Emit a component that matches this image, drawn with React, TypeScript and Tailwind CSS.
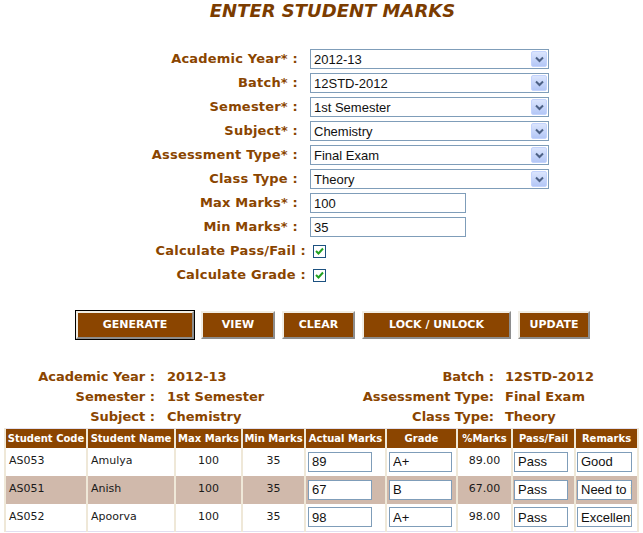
import React from 'react';

const brown = 'text-[#8a4500]';

function SelectBox({ value }: { value: string }) {
  return (
    <div className="flex h-[20px] w-[239px] items-center border border-[#7f9db9] bg-white">
      <span className="flex-1 pl-[3px] font-['Liberation_Sans',Arial,sans-serif] text-[13px] leading-none text-[#111]">
        {value}
      </span>
      <span className="mr-[1px] flex h-[16px] w-[16px] items-center justify-center rounded-[2px] border border-[#c3d3fd] bg-gradient-to-b from-[#dbe5fd] to-[#b4c7f6]">
        <svg width="9" height="7" viewBox="0 0 9 7">
          <path d="M1 1.5 L4.5 5 L8 1.5" fill="none" stroke="#4d6185" strokeWidth="2" />
        </svg>
      </span>
    </div>
  );
}

function TextBox({ value, w }: { value: string; w: string }) {
  return (
    <input
      readOnly
      value={value}
      className={`block h-[20px] border border-[#7f9db9] bg-white pl-[3px] font-['Liberation_Sans',Arial,sans-serif] text-[13px] leading-none text-[#111] outline-none ${w}`}
    />
  );
}

function Check() {
  return (
    <span className="flex h-[13px] w-[13px] items-center justify-center border border-[#1c5180] bg-white">
      <svg width="9" height="8" viewBox="0 0 9 8">
        <path d="M1 4 L3.5 6.5 L8 1.5" fill="none" stroke="#21a121" strokeWidth="2" />
      </svg>
    </span>
  );
}

const formRows: { label: string; kind: 'select' | 'text' | 'check'; value?: string }[] = [
  { label: 'Academic Year* :', kind: 'select', value: '2012-13' },
  { label: 'Batch* :', kind: 'select', value: '12STD-2012' },
  { label: 'Semester* :', kind: 'select', value: '1st Semester' },
  { label: 'Subject* :', kind: 'select', value: 'Chemistry' },
  { label: 'Assessment Type* :', kind: 'select', value: 'Final Exam' },
  { label: 'Class Type :', kind: 'select', value: 'Theory' },
  { label: 'Max Marks* :', kind: 'text', value: '100' },
  { label: 'Min Marks* :', kind: 'text', value: '35' },
  { label: 'Calculate Pass/Fail :', kind: 'check' },
  { label: 'Calculate Grade :', kind: 'check' },
];

const buttons = [
  { label: 'GENERATE', w: 'w-[118px]', focus: true },
  { label: 'VIEW', w: 'w-[74px]' },
  { label: 'CLEAR', w: 'w-[73px]' },
  { label: 'LOCK / UNLOCK', w: 'w-[149px]' },
  { label: 'UPDATE', w: 'w-[72px]' },
];

const students = [
  { code: 'AS053', name: 'Amulya', actual: '89', grade: 'A+', pct: '89.00', pf: 'Pass', remarks: 'Good' },
  { code: 'AS051', name: 'Anish', actual: '67', grade: 'B', pct: '67.00', pf: 'Pass', remarks: 'Need to improve' },
  { code: 'AS052', name: 'Apoorva', actual: '98', grade: 'A+', pct: '98.00', pf: 'Pass', remarks: 'Excellent' },
];

const headers = [
  'Student Code',
  'Student Name',
  'Max Marks',
  'Min Marks',
  'Actual Marks',
  'Grade',
  '%Marks',
  'Pass/Fail',
  'Remarks',
];
const colW = [82, 88, 67, 63, 81, 71, 55, 63, 63];

export default function App() {
  return (
    <div className="h-[533px] w-[643px] overflow-hidden bg-white font-['DejaVu_Sans',Verdana,sans-serif]">
      <h1 className="h-[47px] pl-[22px] text-center text-[18px] font-bold italic leading-[22px] text-[#7b3c00]">
        ENTER STUDENT MARKS
      </h1>

      <div className="flex flex-col">
        {formRows.map((r) => (
          <div key={r.label} className="flex h-[24px] items-center">
            <span
              className={`whitespace-nowrap text-right text-[13px] font-bold tracking-[0.2px] ${brown} ${
                r.kind === 'check' ? 'w-[306px]' : 'w-[298px]'
              }`}
            >
              {r.label}
            </span>
            {r.kind === 'select' && (
              <div className="ml-[12px]">
                <SelectBox value={r.value!} />
              </div>
            )}
            {r.kind === 'text' && (
              <div className="ml-[12px]">
                <TextBox value={r.value!} w="w-[156px]" />
              </div>
            )}
            {r.kind === 'check' && (
              <div className="ml-[7px]">
                <Check />
              </div>
            )}
          </div>
        ))}
      </div>

      <div className="ml-[75px] mt-[23px] flex items-center gap-[7px]">
        {buttons.map((b) => (
          <div key={b.label} className={b.focus ? '-mr-[1px] border border-black' : 'py-[1px]'}>
            <button
              className={`flex h-[28px] items-center justify-center border-2 border-b-[#8d8d8d] border-l-[#f1ede4] border-r-[#8d8d8d] border-t-[#f1ede4] bg-[#8b4500] text-[11px] font-bold text-white ${b.w}`}
            >
              {b.label}
            </button>
          </div>
        ))}
      </div>

      <div className={`mt-[27px] grid grid-cols-[155px_190px_149px_1fr] text-[13px] font-bold ${brown}`}>
        {[
          ['Academic Year :', '2012-13', 'Batch :', '12STD-2012'],
          ['Semester :', '1st Semester', 'Assessment Type:', 'Final Exam'],
          ['Subject :', 'Chemistry', 'Class Type:', 'Theory'],
        ].map((row) => (
          <React.Fragment key={row[0]}>
            <span className="flex h-[20px] items-center justify-end whitespace-nowrap">{row[0]}</span>
            <span className="flex h-[20px] items-center whitespace-nowrap pl-[12px]">{row[1]}</span>
            <span className="flex h-[20px] items-center justify-end whitespace-nowrap">{row[2]}</span>
            <span className="flex h-[20px] items-center whitespace-nowrap pl-[11px]">{row[3]}</span>
          </React.Fragment>
        ))}
      </div>

      <table className="ml-[4px] mt-[1px] table-fixed border-collapse border border-[#e2dff0] text-[11px]">
        <colgroup>
          {colW.map((w, i) => (
            <col key={i} style={{ width: w }} />
          ))}
        </colgroup>
        <thead>
          <tr className="h-[19px] bg-[#8b4500]">
            {headers.map((h) => (
              <th
                key={h}
                className="whitespace-nowrap border-x-2 border-[#efe8d8] px-0 text-center text-[10px] font-bold text-white"
              >
                {h}
              </th>
            ))}
          </tr>
        </thead>
        <tbody>
          {students.map((s, i) => (
            <tr key={s.code} className={`h-[28px] ${i === 1 ? 'bg-[#d0b9ab]' : 'bg-white'}`}>
              <td className="border-x-2 border-[#efe8d8] pl-[3px] text-[#1a1a1a]">{s.code}</td>
              <td className="border-x-2 border-[#efe8d8] pl-[3px] text-[#1a1a1a]">{s.name}</td>
              <td className="border-x-2 border-[#efe8d8] text-center text-[#1a1a1a]">100</td>
              <td className="border-x-2 border-[#efe8d8] text-center text-[#1a1a1a]">35</td>
              <td className="border-x-2 border-[#efe8d8] pl-[2px]">
                <TextBox value={s.actual} w="w-[64px]" />
              </td>
              <td className="border-x-2 border-[#efe8d8] pl-[2px]">
                <TextBox value={s.grade} w="w-[63px]" />
              </td>
              <td className="border-x-2 border-[#efe8d8] text-center text-[#1a1a1a]">{s.pct}</td>
              <td className="border-x-2 border-[#efe8d8] pl-[1px]">
                <TextBox value={s.pf} w="w-[54px]" />
              </td>
              <td className="border-x-2 border-[#efe8d8] pl-[1px]">
                <TextBox value={s.remarks} w="w-[55px]" />
              </td>
            </tr>
          ))}
        </tbody>
      </table>
    </div>
  );
}
